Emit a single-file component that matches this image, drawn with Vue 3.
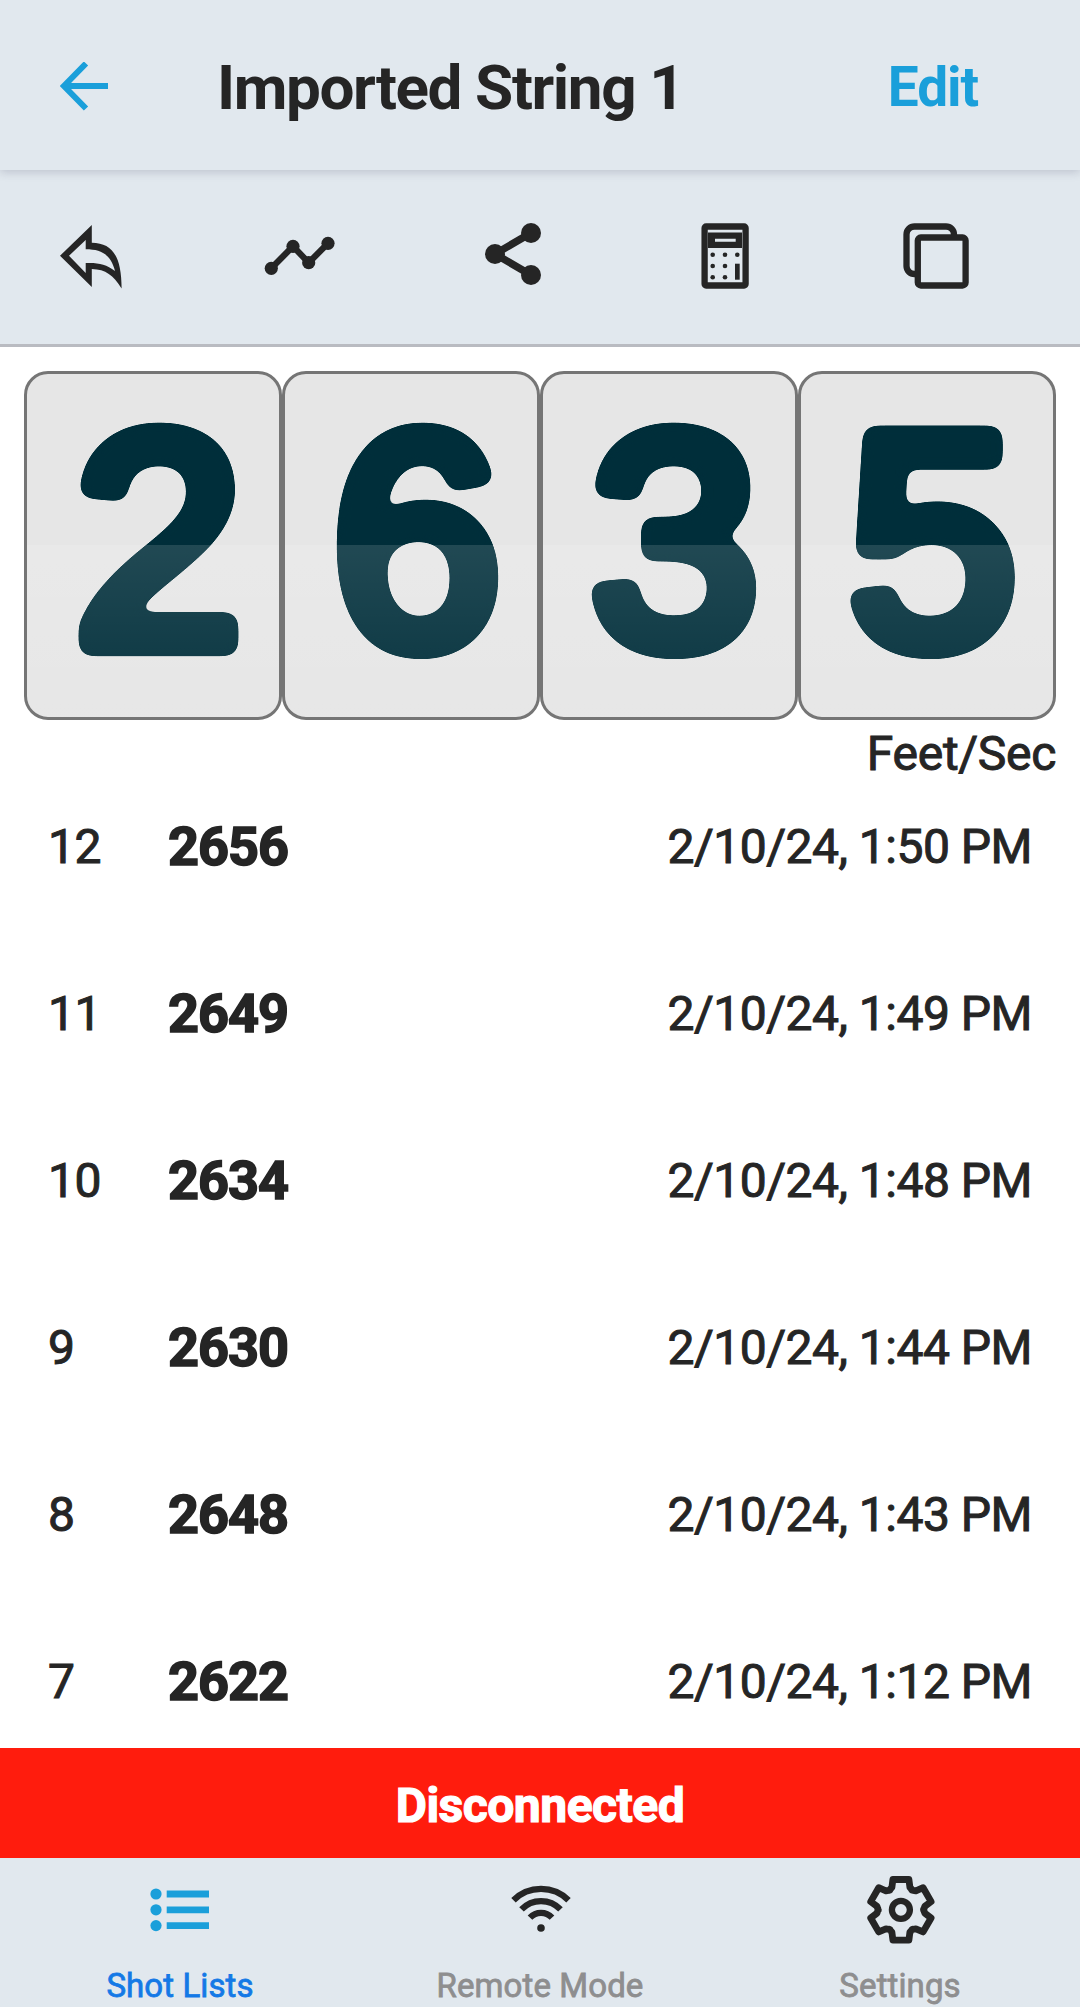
<template>
  <div class="screen">
    <header class="nav-bar">
      <svg class="back-icon" viewBox="0 0 50 50">
        <path d="M26 1.500 4 24l22 22.500M4.500 24H48" />
      </svg>
      <h1 class="title">Imported String 1</h1>
      <span class="edit">Edit</span>
    </header>

    <div class="toolbar">
      <svg class="tool reply" viewBox="60 222 64 68">
        <path
          fill-rule="evenodd"
          d="M60 255.700 91.800 225V242.700C113 243 121.500 257 121.600 288.500 113 275 106 269.500 91.800 269V287ZM69 255.700 85.700 273V263C98 262.500 106 264 115 271 111 255 102 249.300 85.700 249.300V240Z"
        />
      </svg>
      <svg class="tool trend" viewBox="264 222 72 68">
        <path class="line" d="M271.300 268.300 293 246.300 308.700 262.700 328 243.300" />
        <circle v-for="p in trendPoints" :key="p[0]" :cx="p[0]" :cy="p[1]" r="6.600" />
      </svg>
      <svg class="tool share" viewBox="484 222 60 68">
        <path class="line thick" d="M531 233 495 254 531 275" />
        <circle cx="495" cy="254" r="10" />
        <circle cx="531" cy="233" r="10" />
        <circle cx="531" cy="275" r="10" />
      </svg>
      <svg class="tool calc" viewBox="700 222 50 68">
        <rect class="line" x="704.600" y="226.500" width="41" height="59" rx="1.500" />
        <path fill-rule="evenodd" d="M708 232.500h34V248h-34ZM715 238.700v3h20.700v-3Z" />
        <template v-for="y in [254.7, 266, 277.3]" :key="y">
          <circle cx="712.700" :cy="y" r="2.300" />
          <circle cx="725" :cy="y" r="2.300" />
        </template>
        <circle cx="737.300" cy="254.700" r="2.300" />
        <rect x="735" y="263.700" width="4.700" height="16" />
      </svg>
      <svg class="tool copy" viewBox="902 222 68 68">
        <rect class="line" x="917.800" y="237.500" width="47.800" height="48" rx="3" />
        <path class="line" d="M954 236v-1.500a8 8 0 0 0-8-8h-31.500a8 8 0 0 0-8 8V266a8 8 0 0 0 8 8h1.500" />
      </svg>
    </div>

    <main class="content">
      <div class="counter">
        <div v-for="(digit, i) in digits" :key="i" class="flip-card">
          <svg class="digit" viewBox="0 0 252 360">
            <!-- Blur and threshold, rounds off the ends of the strokes -->
            <filter :id="`soft-${i}`" x="-10%" y="-10%" width="120%" height="120%">
              <feGaussianBlur stdDeviation="6" />
              <feColorMatrix values="1 0 0 0 0  0 1 0 0 0  0 0 1 0 0  0 0 0 20 -9.500" />
            </filter>
            <g :filter="`url(#soft-${i})`">
              <text x="131.500" y="279.500" text-anchor="middle">{{ digit }}</text>
            </g>
          </svg>
        </div>
      </div>
      <div class="unit">Feet/Sec</div>

      <ul class="shots">
        <li v-for="shot in shots" :key="shot.id" class="shot">
          <span class="shot-id">{{ shot.id }}</span>
          <span class="shot-speed">{{ shot.speed }}</span>
          <span class="shot-time">{{ shot.time }}</span>
        </li>
      </ul>
    </main>

    <div class="status">Disconnected</div>

    <nav class="tabs">
      <div class="tab active">
        <svg class="tab-icon" viewBox="140 1870 80 80">
          <circle v-for="y in listRows" :key="y" cx="156" :cy="y" r="5.600" />
          <path class="line" d="M166.700 1894H209M166.700 1909.800H209M166.700 1925.600H209" />
        </svg>
        <span>Shot Lists</span>
      </div>
      <div class="tab">
        <svg class="tab-icon" viewBox="500 1870 80 80">
          <path
            class="line"
            d="M513.500 1900.200A39 39 0 0 1 568.500 1900.200M521.500 1909.400A27 27 0 0 1 560.500 1909.400M530 1917.600A15 15 0 0 1 552 1917.600"
          />
          <circle cx="541" cy="1928" r="3.800" />
        </svg>
        <span>Remote Mode</span>
      </div>
      <div class="tab">
        <svg class="tab-icon" viewBox="860 1870 80 80">
          <path class="line round" :d="gearPath" />
          <circle class="line" cx="900.900" cy="1909.800" r="9" />
        </svg>
        <span>Settings</span>
      </div>
    </nav>
  </div>
</template>

<script setup>
const digits = ['2', '6', '3', '5']

const shots = [
  { id: 12, speed: 2656, time: '2/10/24, 1:50 PM' },
  { id: 11, speed: 2649, time: '2/10/24, 1:49 PM' },
  { id: 10, speed: 2634, time: '2/10/24, 1:48 PM' },
  { id: 9, speed: 2630, time: '2/10/24, 1:44 PM' },
  { id: 8, speed: 2648, time: '2/10/24, 1:43 PM' },
  { id: 7, speed: 2622, time: '2/10/24, 1:12 PM' },
]

const trendPoints = [
  [271.3, 268.3],
  [293, 246.3],
  [308.7, 262.7],
  [328, 243.3],
]

const listRows = [1894, 1909.8, 1925.6]

// Six teeth, each one the same outline turned by 60 degrees
const tooth = [
  [-11.5, -19.5],
  [-9, -22.5],
  [-8, -30.3],
  [8, -30.3],
  [9, -22.5],
  [11.5, -19.5],
]
const gearPath =
  'M' +
  [0, 60, 120, 180, 240, 300]
    .flatMap((deg) => {
      const a = (deg * Math.PI) / 180
      return tooth.map(([x, y]) => {
        const px = 900.9 + x * Math.cos(a) - y * Math.sin(a)
        const py = 1909.8 + x * Math.sin(a) + y * Math.cos(a)
        return `${px.toFixed(1)} ${py.toFixed(1)}`
      })
    })
    .join('L') +
  'Z'
</script>

<style>
body {
  margin: 0;
  background: #fff;
}
</style>

<style scoped>
.screen {
  width: 1080px;
  height: 2007px;
  display: flex;
  flex-direction: column;
  overflow: hidden;
  font-family: Roboto, 'Liberation Sans', sans-serif;
  color: #252525;
}

.nav-bar {
  height: 170px;
  flex: none;
  display: flex;
  align-items: center;
  box-sizing: border-box;
  padding: 4px 102px 0 60px;
  background: #e1e8ee;
  box-shadow: 0 2px 9px rgba(60, 60, 90, 0.22);
  z-index: 1;
}

.back-icon {
  width: 50px;
  height: 50px;
  fill: none;
  stroke: #1a9fda;
  stroke-width: 6;
}

.title {
  margin: 1px 0 0 107px;
  font-size: 62px;
  font-weight: 700;
  line-height: 70px;
  letter-spacing: -1.4px;
  white-space: nowrap;
}

.edit {
  margin-left: auto;
  font-size: 55px;
  font-weight: 700;
  line-height: 64px;
  letter-spacing: -1.1px;
  color: #1a9fda;
}

.toolbar {
  height: 177px;
  flex: none;
  display: flex;
  align-items: flex-start;
  box-sizing: border-box;
  padding: 52px 0 0 60px;
  background: #e1e8ee;
  border-bottom: 3px solid #b9bbc1;
}

.tool {
  height: 68px;
  fill: #252525;
}

.reply {
  width: 64px;
}

.trend {
  width: 72px;
  margin-left: 140px;
}

.share {
  width: 60px;
  margin-left: 148px;
}

.calc {
  width: 50px;
  margin-left: 156px;
}

.copy {
  width: 68px;
  margin-left: 152px;
}

.line {
  fill: none;
  stroke: #252525;
  stroke-width: 6.3;
}

.line.thick {
  stroke-width: 7.5;
}

.line.round {
  stroke-width: 6.8;
  stroke-linejoin: round;
}

.content {
  flex: 1;
  min-height: 0;
  padding: 24px 24px 0;
}

.counter {
  display: flex;
}

.flip-card {
  position: relative;
  flex: 1;
  display: flex;
  align-items: center;
  height: 349px;
  box-sizing: border-box;
  border: 3px solid #757575;
  border-radius: 24px;
  background: #e6e6e6;
}

.digit {
  flex: none;
  width: 252px;
  height: 360px;
}

.digit text {
  font-family: 'Liberation Sans', sans-serif;
  font-size: 304px;
  fill: #002e3a;
  stroke: #002e3a;
  stroke-width: 21.5px;
  stroke-linejoin: round;
}

.digit filter {
  color-interpolation-filters: sRGB;
}

/* Glossy lower half */
.flip-card::after {
  content: '';
  position: absolute;
  inset: 171px 0 0;
  border-radius: 0 0 21px 21px;
  background: linear-gradient(rgba(255, 255, 255, 0.13), rgba(255, 255, 255, 0.03));
}

.unit {
  margin-top: 6px;
  text-align: right;
  font-size: 48px;
  line-height: 56px;
  letter-spacing: -0.3px;
  -webkit-text-stroke: 1px;
}

.shots {
  list-style: none;
  margin: 33px 0 0;
  padding: 0 24px;
}

.shot {
  display: flex;
  align-items: flex-start;
  height: 167px;
  line-height: 64px;
  font-size: 48px;
}

.shot-id {
  width: 120px;
  letter-spacing: -0.5px;
  -webkit-text-stroke: 1px;
}

.shot-speed {
  font-size: 54px;
  font-weight: 700;
  letter-spacing: -1px;
  -webkit-text-stroke: 1.6px;
}

.shot-time {
  margin-left: auto;
  letter-spacing: -0.5px;
  -webkit-text-stroke: 1px;
}

.status {
  height: 110px;
  flex: none;
  background: #ff1c0d;
  color: #fff;
  font-size: 48px;
  font-weight: 700;
  line-height: 115px;
  letter-spacing: -0.5px;
  text-align: center;
  -webkit-text-stroke: 1.2px;
}

.tabs {
  height: 149px;
  flex: none;
  display: flex;
  background: #e1e8ee;
}

.tab {
  flex: 1;
  display: flex;
  flex-direction: column;
  align-items: center;
  padding-top: 12px;
  font-size: 33px;
  line-height: 38px;
  letter-spacing: 0.1px;
  color: #8e8e8f;
  -webkit-text-stroke: 0.8px;
}

.tab-icon {
  width: 80px;
  height: 80px;
  margin-bottom: 17px;
  fill: #252525;
}

.tab.active {
  color: #1479e6;
}

.tab.active .tab-icon {
  fill: #1a9fda;
}

.tab.active .line {
  stroke: #1a9fda;
  stroke-width: 6.8;
}
</style>
